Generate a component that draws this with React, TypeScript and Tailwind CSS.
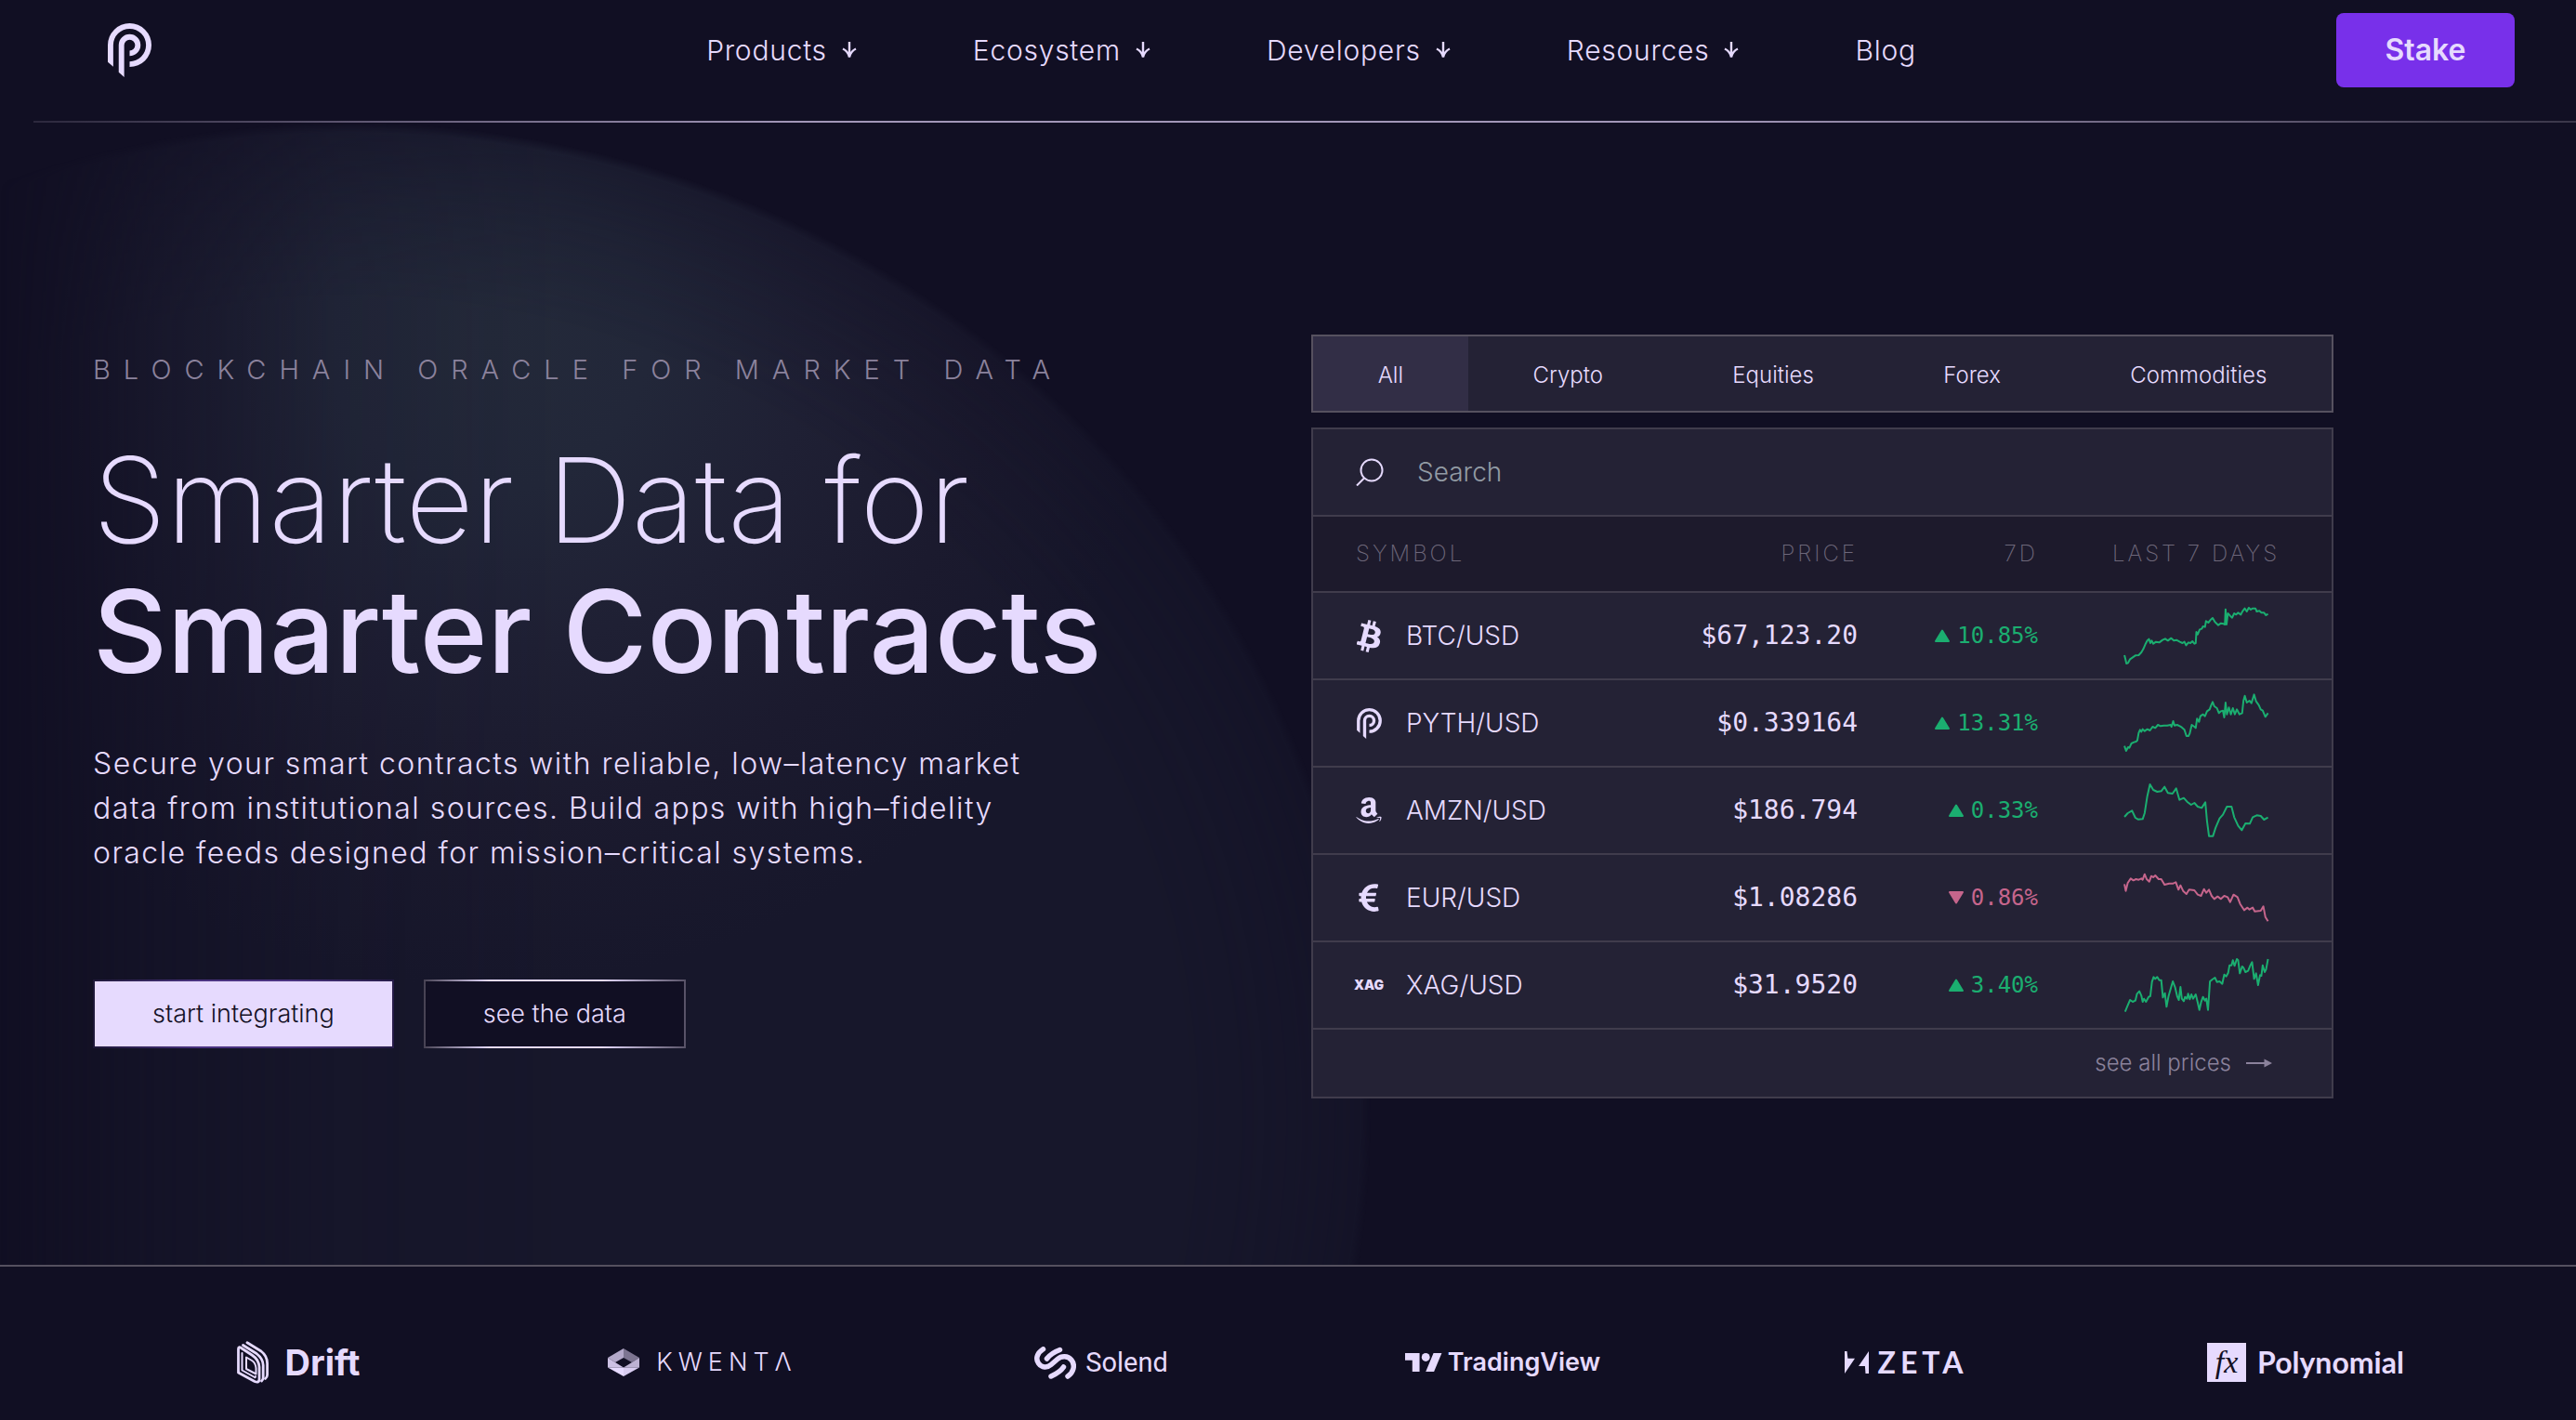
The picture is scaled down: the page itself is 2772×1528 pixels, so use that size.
import React from 'react';
import { FaAmazon, FaEuroSign } from 'react-icons/fa';

const PythMark = ({ className }: { className?: string }) => (
  <svg viewBox="0 0 8 9.85" className={className} fill="currentColor" aria-hidden="true">
    <path d="M0 7.1V4A4 4 0 1 1 4 8V7A3 3 0 1 0 1 4V7.95Z" />
    <path d="M2 8.95V4A2 2 0 1 1 4 6V5A1 1 0 1 0 3 4V9.85Z" />
  </svg>
);

const BitcoinMark = ({ className }: { className?: string }) => (
  <svg viewBox="8.6 6 14.7 20" className={className} fill="currentColor" aria-hidden="true">
    <path d="M23.189 14.02c.314-2.096-1.283-3.223-3.465-3.975l.708-2.84-1.728-.43-.69 2.765c-.454-.114-.92-.22-1.385-.326l.695-2.783L15.596 6l-.708 2.839c-.376-.086-.746-.17-1.104-.26l.002-.009-2.384-.595-.46 1.846s1.283.294 1.256.312c.7.175.826.638.805 1.006l-.806 3.235c.048.012.11.03.18.057l-.183-.045-1.13 4.532c-.086.212-.303.531-.793.41.018.025-1.256-.313-1.256-.313l-.858 1.978 2.25.561c.418.105.828.215 1.231.318l-.715 2.872 1.727.43.708-2.84c.472.127.93.245 1.378.357l-.706 2.828 1.728.43.715-2.866c2.948.558 5.164.333 6.097-2.333.752-2.146-.037-3.385-1.588-4.192 1.13-.26 1.98-1.003 2.207-2.538zm-3.95 5.538c-.533 2.147-4.148.986-5.32.695l.95-3.805c1.172.293 4.929.872 4.37 3.11zm.535-5.569c-.487 1.953-3.495.96-4.47.717l.86-3.45c.975.243 4.118.696 3.61 2.733z" />
  </svg>
);

const navItems = [
  { label: 'Products', menu: true },
  { label: 'Ecosystem', menu: true },
  { label: 'Developers', menu: true },
  { label: 'Resources', menu: true },
  { label: 'Blog', menu: false },
];

const Header = () => (
  <header>
    <div className="grid grid-cols-[1fr_auto_1fr] items-center pt-[14px] pb-9 pl-[116px] pr-[66px]">
      <a href="#" aria-label="Pyth home">
        <PythMark className="w-[47px] h-[58px]" />
      </a>
      <nav className="flex gap-[125px]">
        {navItems.map((item) =>
          item.menu ? (
            <button key={item.label} type="button" className="flex items-center gap-4 text-[30px] leading-10 font-light tracking-wide">
              {item.label}
              <svg viewBox="0 0 16 18" className="w-4 h-[18px]" fill="none" stroke="currentColor" strokeWidth="2.4" aria-hidden="true">
                <path d="M8 0V16M1 7.500Q6.500 10 8 16.500Q9.500 10 15 7.500" />
              </svg>
            </button>
          ) : (
            <a key={item.label} href="#" className="text-[30px] leading-10 font-light tracking-wide">
              {item.label}
            </a>
          ),
        )}
      </nav>
      <button type="button" className="justify-self-end w-48 h-20 rounded-lg bg-[#7830ea] text-[32px] font-semibold">
        Stake
      </button>
    </div>
    <div className="ml-9 h-[2px] bg-[linear-gradient(90deg,#2c283d_0%,#a296b8_30%,#a296b8_66%,#3a3649_100%)]" />
  </header>
);

const tabs = ['All', 'Crypto', 'Equities', 'Forex', 'Commodities'];

type Row = {
  symbol: string;
  price: string;
  change: string;
  up: boolean;
  icon: React.ReactNode;
  points: string;
};

const rows: Row[] = [
  {
    symbol: 'BTC/USD',
    price: '$67,123.20',
    change: '10.85%',
    up: true,
    icon: <BitcoinMark className="w-[26px] h-[35px]" />,
    points:
      '3,162 6,175 9,189 14,187 20,175 28,169 36,163 46,162 54,153 60,142 66,127 72,115 77,110 81,123 85,115 90,125 98,119 108,121 118,113 126,109 134,115 144,107 152,115 160,113 170,119 178,123 184,119 189,130 196,121 202,123 208,117 214,125 218,123 220,87 224,95 230,79 236,77 240,69 246,71 249,52 256,57 262,49 269,42 276,55 286,65 294,59 302,61 306,63 308,14 311,63 315,27 322,35 328,41 334,27 340,31 346,25 354,31 360,19 366,11 372,21 378,9 384,15 390,11 398,11 402,21 410,19 416,25 424,25 430,33 436,29',
  },
  {
    symbol: 'PYTH/USD',
    price: '$0.339164',
    change: '13.31%',
    up: true,
    icon: <PythMark className="w-[27px] h-[33px]" />,
    points:
      '3,173 8,189 14,177 18,179 24,165 32,161 38,159 42,155 46,131 50,121 54,127 58,119 64,125 72,119 80,123 88,111 96,115 104,105 112,109 122,107 132,107 142,105 145,111 150,93 154,107 162,105 170,109 176,113 184,121 190,141 196,141 200,133 206,105 214,111 218,115 222,85 228,95 232,77 240,71 246,77 252,61 260,55 264,43 269,31 274,45 282,51 288,67 294,61 300,59 304,81 308,33 312,71 318,49 324,71 330,51 336,71 342,55 350,71 358,67 362,27 366,11 372,33 380,27 386,35 394,7 400,29 408,41 414,55 420,59 428,79 436,67',
  },
  {
    symbol: 'AMZN/USD',
    price: '$186.794',
    change: '0.33%',
    up: true,
    icon: <FaAmazon className="size-[32px]" aria-hidden="true" />,
    points:
      '3,120 13,108 26,100 36,123 44,128 58,127 64,108 72,53 80,15 90,33 102,39 114,37 124,23 134,43 148,45 159,28 169,65 182,59 192,71 204,81 214,75 224,87 236,91 247,73 252,133 258,182 270,182 278,155 290,125 300,113 312,87 326,87 334,121 346,149 357,163 368,141 381,142 390,121 402,115 414,117 424,129 436,122',
  },
  {
    symbol: 'EUR/USD',
    price: '$1.08286',
    change: '0.86%',
    up: false,
    icon: <FaEuroSign className="size-[34px]" aria-hidden="true" />,
    points:
      '3,55 7,77 13,51 22,37 30,43 38,39 46,41 54,37 58,41 64,23 70,39 78,47 84,29 90,33 96,27 106,39 114,39 124,57 138,53 150,53 158,49 166,73 172,59 180,77 190,87 198,73 214,75 224,89 234,93 243,71 250,83 258,73 266,93 274,103 284,95 294,103 304,93 314,97 322,113 332,89 344,97 352,119 364,139 374,131 380,137 390,131 396,143 414,141 422,127 428,161 436,175',
  },
  {
    symbol: 'XAG/USD',
    price: '$31.9520',
    change: '3.40%',
    up: true,
    icon: <span className="text-sm leading-4 font-black">XAG</span>,
    points:
      '5,185 12,167 20,147 28,153 36,149 41,127 48,119 54,133 58,153 62,143 68,153 76,137 81,135 86,89 91,73 96,79 102,73 108,83 114,83 119,139 125,125 130,169 136,135 144,105 149,87 156,107 162,135 167,147 172,105 176,143 182,151 186,137 192,143 195,127 200,145 205,129 210,143 218,129 224,155 229,179 234,155 240,137 246,149 250,143 255,179 261,87 268,81 276,75 282,89 290,87 298,95 304,65 310,71 316,59 320,35 326,35 330,19 335,37 342,15 346,19 351,61 358,39 362,43 368,57 376,53 382,37 388,25 394,79 400,61 406,99 412,67 416,69 420,35 426,57 430,49 436,15',
  },
];

const PriceCard = () => (
  <div className="flex flex-col gap-4">
    <div role="tablist" className="flex border-2 border-[#56515f] bg-[#242235]">
      {tabs.map((tab, i) => (
        <button
          key={tab}
          role="tab"
          type="button"
          aria-selected={i === 0}
          className={`flex-auto h-20 pt-1 text-2xl font-light ${i === 0 ? 'bg-[#322e46]' : ''}`}
        >
          {tab}
        </button>
      ))}
    </div>
    <div className="border-2 border-[#403c4c] bg-[#242235]">
      <label className="flex items-center gap-9 h-[94px] pl-[46px] border-b-2 border-[#403c4c]">
        <svg viewBox="0 0 30 30" className="w-[30px] h-[30px]" fill="none" stroke="currentColor" strokeWidth="2" aria-hidden="true">
          <circle cx="17" cy="13" r="11.5" />
          <path d="M9 21.500 1 29.500" />
        </svg>
        <input
          type="text"
          aria-label="Search"
          placeholder="Search"
          className="flex-1 bg-transparent text-[28px] font-light outline-none placeholder:text-[#929ba4]"
        />
      </label>
      <table className="w-full table-fixed border-collapse">
        <thead>
          <tr className="h-[81px] border-b-2 border-[#403c4c] bg-[#1d1a2c] text-2xl text-[#6d677a] tracking-[3px]">
            <th scope="col" className="pl-[46px] text-left font-extralight">SYMBOL</th>
            <th scope="col" className="w-[300px] pr-[22px] text-right font-extralight">PRICE</th>
            <th scope="col" className="w-[196px] pr-6 text-right font-extralight">7D</th>
            <th scope="col" className="w-[292px] text-center font-extralight">LAST 7 DAYS</th>
          </tr>
        </thead>
        <tbody>
          {rows.map((row) => (
            <tr key={row.symbol} className="h-[94px] border-b-2 border-[#403c4c]">
              <td className="pl-[42px]">
                <div className="flex items-center gap-[22px] text-[28px] font-light">
                  <span className="flex w-9 justify-center">{row.icon}</span>
                  {row.symbol}
                </div>
              </td>
              <td className="pr-[22px] text-right font-['DejaVu_Sans_Mono',monospace] text-[28px]">{row.price}</td>
              <td className={`pr-6 ${row.up ? 'text-[#1bae70]' : 'text-[#c6658c]'}`}>
                <div className="flex items-center justify-end gap-2 font-['DejaVu_Sans_Mono',monospace] text-2xl">
                  <svg viewBox="0 0 16 14" className={`w-4 h-[14px] ${row.up ? '' : 'rotate-180'}`} fill="currentColor" stroke="currentColor" strokeWidth="2" strokeLinejoin="round" aria-hidden="true">
                    <path d="M8 1.500 15 13H1Z" />
                  </svg>
                  {row.change}
                </div>
              </td>
              <td className={row.up ? 'text-[#1bae70]' : 'text-[#c6658c]'}>
                <svg viewBox="0 0 440 198" preserveAspectRatio="none" className="mx-auto w-[157px] h-[66px]" fill="none" stroke="currentColor" strokeWidth="2" strokeLinejoin="round" aria-hidden="true">
                  <polyline points={row.points} vectorEffect="non-scaling-stroke" />
                </svg>
              </td>
            </tr>
          ))}
        </tbody>
      </table>
      <div className="flex h-[72px] items-center justify-end pr-16">
        <a href="#" className="flex items-center gap-4 text-2xl font-light text-[#8b829c]">
          see all prices
          <svg viewBox="0 0 28 10" className="w-7 h-[10px]" fill="currentColor" aria-hidden="true">
            <path d="M0 4H19.500V0.500L28 5L19.500 9.500V6H0Z" />
          </svg>
        </a>
      </div>
    </div>
  </div>
);

const Hero = () => (
  <section className="relative overflow-hidden border-b-2 border-[#55505f]">
    <div className="absolute inset-0 [mask-image:linear-gradient(90deg,transparent_0%,rgba(0,0,0,0.5)_6%,rgba(0,0,0,0.85)_13%,#000_22%)]" aria-hidden="true">
      <div className="absolute -left-[725px] top-0 w-[2200px] h-[2136px] rounded-[50%] bg-[radial-gradient(ellipse_720px_700px_at_1250px_230px,#242a3a_0%,#222739_24%,#1f2034_48%,#1b1a2e_74%,#17172b_100%)] [mask-image:radial-gradient(closest-side,#000_82%,rgba(0,0,0,0.8)_92%,rgba(0,0,0,0.6)_99%,transparent_100%)]" />
    </div>
    <div className="relative grid grid-cols-[1311fr_1100fr] pl-[100px] pr-[261px] pt-[228px] pb-[179px]">
      <div className="pt-[18px]">
        <p className="text-[29px] leading-10 font-light tracking-[14px] text-[#8b829c]">BLOCKCHAIN ORACLE FOR MARKET DATA</p>
        <h1 className="mt-[50px] text-[127px] leading-[141px]">
          <span className="block font-extralight">Smarter Data for</span>
          <span className="block text-[124px] font-[550]">Smarter Contracts</span>
        </h1>
        <p className="mt-12 text-[32px] leading-[48px] font-light tracking-[0.045em]">
          Secure your smart contracts with reliable, low–latency market
          <br />
          data from institutional sources. Build apps with high–fidelity
          <br />
          oracle feeds designed for mission–critical systems.
        </p>
        <div className="mt-28 flex gap-8">
          <button type="button" className="p-[2px] bg-[linear-gradient(90deg,#1e1838,#4a3380_35%,#4a3380_65%,#261c48)]">
            <span className="flex h-[70px] items-center bg-[#e6dafe] px-[62px] text-[27px] font-light text-[#141126]">start integrating</span>
          </button>
          <button type="button" className="p-[2px] bg-[linear-gradient(90deg,#464152,#e6dafe_25%,#e6dafe_68%,#575166)]">
            <span className="flex h-[70px] items-center bg-[#110f23] px-[62px] text-[27px] font-light">see the data</span>
          </button>
        </div>
      </div>
      <PriceCard />
    </div>
  </section>
);

const Partners = () => (
  <section aria-label="Partners" className="grid grid-cols-6 items-center justify-items-center pl-[105px] pr-[75px] pt-20 pb-10">
    <a href="#" className="flex items-center gap-4 text-[38px] leading-[46px] font-bold">
      <svg viewBox="9 7 36 46" className="w-9 h-[46px]" fill="none" stroke="currentColor" strokeWidth="2.800" strokeLinejoin="round" strokeLinecap="round" aria-hidden="true">
        <path d="M11.500 15.500V41L29 50.500Q34 52.500 34 48V35Q33.500 27 26 22L14.500 14.500Q11.500 12.500 11.500 15.500Z" />
        <path d="M15.500 20V38.500L29 46Q30 46.500 30 45" strokeWidth="2" />
        <path d="M20 24.500V37L30.500 42.500V36Q30 30.500 26 28Z" strokeWidth="2" />
        <path d="M16.500 11.500L31 20.500Q38 26 38.200 33V46.500Q38 49 36.500 50" />
        <path d="M21 8.800L36 18Q42.500 23 42.600 31V43.500Q42.500 46 40.500 47.500" />
      </svg>
      Drift
    </a>
    <a href="#" className="flex items-center gap-[18px] pl-[6px] text-[27px] leading-[46px] font-light tracking-[6px]">
      <svg viewBox="0 0 34 30" className="w-[34px] h-[30px]" aria-hidden="true">
        <path d="M17 0V10L8 15L0 10Z" fill="#b3a8c9" />
        <path d="M17 0L34 10L26 15L17 10Z" fill="#7d7591" />
        <path d="M0 10L8 15L17 20.500L0 20.500Z" fill="#cdc1e4" />
        <path d="M34 10L26 15L17 20.500L34 20.500Z" fill="#bdb2d3" />
        <path d="M0 20.500H17V30Z" fill="#e6dafe" />
        <path d="M34 20.500H17V30Z" fill="#d8ccf0" />
      </svg>
      KWENTΛ
    </a>
    <a href="#" className="flex items-center gap-[10px] font-['Roboto'] text-[29px] leading-[46px]">
      <svg viewBox="0 0 45 35" className="w-[45px] h-[35px]" fill="none" stroke="currentColor" strokeWidth="5.500" strokeLinecap="round" aria-hidden="true">
        <path d="M9.500 2.800C3 7 1 13 4.500 18C8 23 14 23 18 19.500L25 13.500C29 10 36 9.500 40 14.500C44.500 20 42 28 36 32" />
        <path d="M27.500 3.500C22 5.500 17 8.500 13.500 13" />
        <path d="M31.500 22C28.500 26.500 23.500 29.500 18 32" />
      </svg>
      Solend
    </a>
    <a href="#" className="flex items-center gap-[6px] text-[27px] leading-[46px] font-semibold">
      <svg viewBox="0 4 36 18" className="w-10 h-5" fill="currentColor" aria-hidden="true">
        <path d="M14 22H7V11H0V4h14v18zM28 22h-8l7.500-18h8L28 22z" />
        <circle cx="20" cy="8" r="4" />
      </svg>
      TradingView
    </a>
    <a href="#" className="flex items-center gap-[10px] pl-1 font-['Lato'] text-[32px] leading-[46px] font-bold tracking-[5px]">
      <svg viewBox="0 0 26 24" className="w-[26px] h-6" fill="currentColor" aria-hidden="true">
        <path d="M0 0H2.500L3.400 7.700H11L0 24Z" />
        <path d="M26 0V24H22.500L21.900 16H15Z" />
      </svg>
      ZETA
    </a>
    <a href="#" className="flex items-center gap-3 font-['Lato'] text-[32px] leading-[46px] font-bold">
      <span className="flex h-[42px] w-[42px] items-center justify-center bg-[#e6dafe] font-['Liberation_Serif',serif] text-[34px] leading-none font-normal italic text-[#110f23]">fx</span>
      Polynomial
    </a>
  </section>
);

export default function App() {
  return (
    <div className="min-h-screen bg-[#110f23] font-['Inter',sans-serif] text-[#e6dafe]">
      <Header />
      <main>
        <Hero />
        <Partners />
      </main>
    </div>
  );
}
